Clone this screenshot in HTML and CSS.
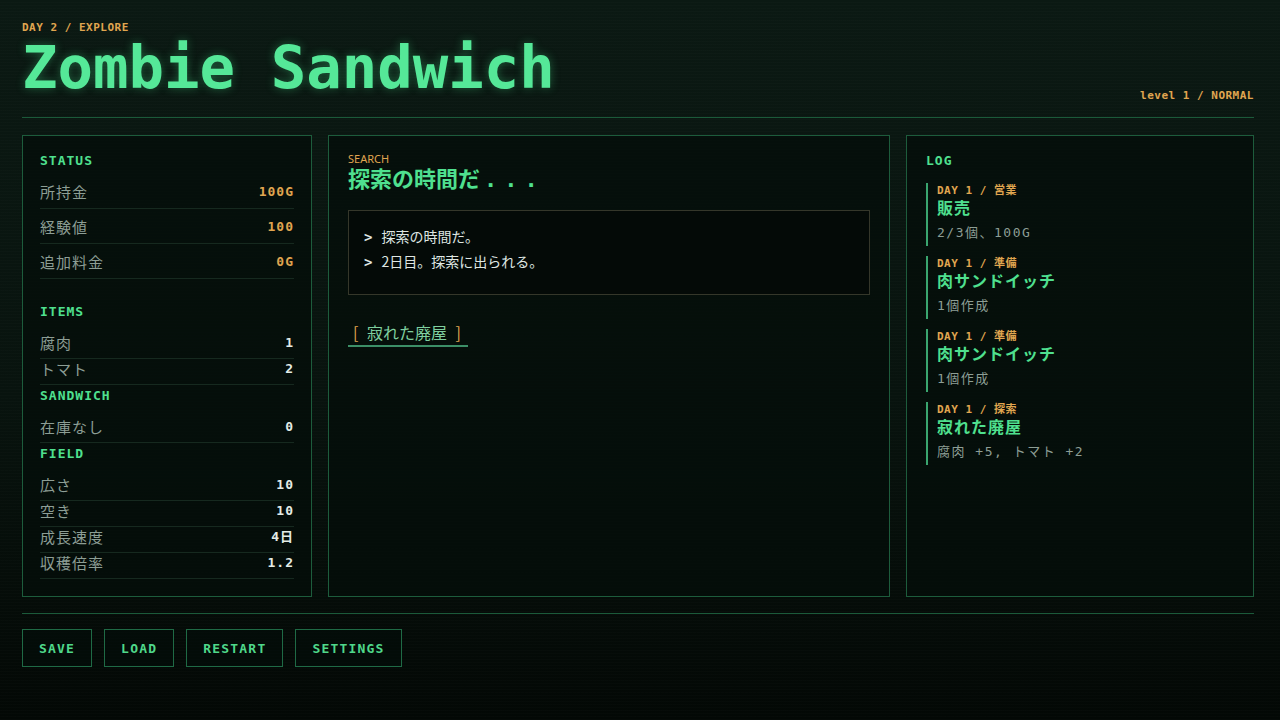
FILE: index.html
```html
<!DOCTYPE html>
<html lang="ja">
<head>
    <meta charset="UTF-8">
    <meta name="viewport" content="width=device-width, initial-scale=1.0">
    <title>Zombie Sandwich</title>
    <link rel="stylesheet" href="styles.css">
</head>
<body>
    <div class="screen">
        <header class="top">
            <div>
                <div class="eyebrow">DAY 2 / EXPLORE</div>
                <h1 class="title">Zombie Sandwich</h1>
            </div>
            <div class="meta">level 1 / NORMAL</div>
        </header>

        <main class="board">
            <!-- player stats -->
            <section class="panel side">
                <h2 class="heading">STATUS</h2>
                <div class="stat-list status">
                    <div class="row"><span>所持金</span><b class="gold">100G</b></div>
                    <div class="row"><span>経験値</span><b class="gold">100</b></div>
                    <div class="row"><span>追加料金</span><b class="gold">0G</b></div>
                </div>

                <h2 class="heading">ITEMS</h2>
                <div class="stat-list">
                    <div class="row"><span>腐肉</span><b>1</b></div>
                    <div class="row"><span>トマト</span><b>2</b></div>
                </div>

                <h2 class="heading">SANDWICH</h2>
                <div class="stat-list">
                    <div class="row"><span>在庫なし</span><b>0</b></div>
                </div>

                <h2 class="heading">FIELD</h2>
                <div class="stat-list">
                    <div class="row"><span>広さ</span><b>10</b></div>
                    <div class="row"><span>空き</span><b>10</b></div>
                    <div class="row"><span>成長速度</span><b>4日</b></div>
                    <div class="row"><span>収穫倍率</span><b>1.2</b></div>
                </div>
            </section>

            <!-- current scene -->
            <section class="panel scene">
                <div class="scene-label">SEARCH</div>
                <h2 class="scene-title">探索の時間だ<span class="dots">...</span></h2>
                <div class="console">
                    <p><span class="prompt">&gt;</span>探索の時間だ。</p>
                    <p><span class="prompt">&gt;</span>2日目。探索に出られる。</p>
                </div>
                <div class="choices">
                    <button class="choice"><i>[</i> 寂れた廃屋 <i>]</i></button>
                </div>
            </section>

            <!-- event history -->
            <section class="panel log">
                <h2 class="heading">LOG</h2>
                <div class="entry">
                    <div class="entry-tag">DAY 1 / 営業</div>
                    <div class="entry-title">販売</div>
                    <div class="entry-text">2/3個、100G</div>
                </div>
                <div class="entry">
                    <div class="entry-tag">DAY 1 / 準備</div>
                    <div class="entry-title">肉サンドイッチ</div>
                    <div class="entry-text">1個作成</div>
                </div>
                <div class="entry">
                    <div class="entry-tag">DAY 1 / 準備</div>
                    <div class="entry-title">肉サンドイッチ</div>
                    <div class="entry-text">1個作成</div>
                </div>
                <div class="entry">
                    <div class="entry-tag">DAY 1 / 探索</div>
                    <div class="entry-title">寂れた廃屋</div>
                    <div class="entry-text">腐肉 +5, トマト +2</div>
                </div>
            </section>
        </main>

        <footer class="bottom">
            <button class="cmd">SAVE</button>
            <button class="cmd">LOAD</button>
            <button class="cmd">RESTART</button>
            <button class="cmd">SETTINGS</button>
        </footer>
    </div>
</body>
</html>
```

FILE: styles.css
```css
html, body {
    margin: 0;
    height: 100%;
}
body {
    background:
        repeating-linear-gradient(0deg, rgba(255,255,255,0.012) 0 1px, transparent 1px 3px),
        linear-gradient(180deg, #0b1913 0%, #08130e 55%, #030805 100%);
    color: #c9d6cf;
    font-family: "DejaVu Sans Mono", "Noto Sans CJK JP", monospace;
    overflow: hidden;
}
.screen {
    padding: 21px 26px 0 22px;
}
.top {
    display: flex;
    justify-content: space-between;
    align-items: flex-end;
    padding-bottom: 16px;
    border-bottom: 1px solid #1b5a3a;
}
.eyebrow {
    font-size: 11px;
    line-height: 14px;
    font-weight: bold;
    letter-spacing: 0.5px;
    color: #e0a650;
}
.title {
    margin: 0;
    font-size: 59px;
    line-height: 66px;
    font-weight: bold;
    color: #55e898;
    text-shadow: 0 0 10px rgba(70, 230, 140, 0.35);
}
.meta {
    font-size: 11px;
    line-height: 14px;
    font-weight: bold;
    letter-spacing: 0.5px;
    color: #e0a650;
    margin-bottom: -2px;
}

.board {
    display: grid;
    grid-template-columns: 290px 562px 1fr;
    grid-template-rows: 462px;
    gap: 16px;
    margin-top: 17px;
}
.panel {
    border: 1px solid #1d5c3c;
    background: rgba(4, 14, 10, 0.75);
    box-sizing: border-box;
    overflow: hidden;
}

/* left column */
.side {
    padding: 17px 17px;
}
.heading {
    margin: 0;
    font-size: 13px;
    line-height: 16px;
    font-weight: bold;
    letter-spacing: 1px;
    color: #4fe08f;
}
.stat-list {
    margin: 13px 0 3px;
}
.stat-list .row {
    display: flex;
    justify-content: space-between;
    align-items: center;
    height: 20px;
    padding: 0 0 5px;
    border-bottom: 1px solid #16291f;
}
.stat-list span {
    font-family: "Noto Sans CJK JP", sans-serif;
    font-size: 15px;
    line-height: 20px;
    letter-spacing: 1px;
    color: #8d9e95;
}
.stat-list b {
    font-size: 13px;
    line-height: 20px;
    letter-spacing: 1px;
    color: #e3ece6;
}
.stat-list b.gold {
    color: #e0a650;
}
.status {
    margin: 5px 0 25px;
}
.status .row {
    padding: 8px 0 6px;
}

/* centre column */
.scene {
    padding: 17px 19px;
}
.scene-label {
    font-family: "Noto Sans", sans-serif;
    font-size: 11px;
    line-height: 12px;
    color: #e0a650;
}
.scene-title {
    margin: 0;
    font-family: "DejaVu Sans Mono", "Noto Sans CJK JP", monospace;
    font-size: 22px;
    line-height: 30px;
    font-weight: bold;
    color: #4fe08f;
}
.scene-title .dots {
    letter-spacing: 7px;
    margin-left: 4px;
}
.console {
    margin-top: 15px;
    border: 1px solid #35372a;
    background: #040a07;
    padding: 13px 15px 20px;
}
.console p {
    margin: 0;
    height: 25px;
    font-family: "Noto Sans CJK JP", sans-serif;
    font-size: 14px;
    line-height: 25px;
    color: #dfe6e2;
}
.console .prompt {
    font-family: "DejaVu Sans Mono", monospace;
    font-weight: bold;
    margin-right: 9px;
}
.choices {
    margin-top: 26px;
}
.choice {
    background: none;
    border: none;
    border-bottom: 2px solid #3c8f67;
    padding: 0 2px 2px 0;
    font-family: "Noto Sans CJK JP", sans-serif;
    font-size: 16px;
    line-height: 22px;
    color: #7fcf9f;
}
.choice i {
    font-style: normal;
    color: #e0a650;
    padding: 0 5px;
}

/* right column */
.log {
    padding: 17px 19px;
}
.log .heading {
    margin-bottom: 14px;
}
.entry {
    border-left: 2px solid #3aa56f;
    padding-left: 9px;
    margin-bottom: 10px;
}
.entry-tag {
    font-size: 11px;
    line-height: 15px;
    font-weight: bold;
    letter-spacing: 0.5px;
    color: #e0a650;
}
.entry-title {
    font-size: 16px;
    line-height: 22px;
    font-weight: bold;
    letter-spacing: 1px;
    color: #4fe08f;
}
.entry-text {
    font-size: 13px;
    line-height: 26px;
    letter-spacing: 1.5px;
    color: #8d9e95;
}

/* command bar */
.bottom {
    display: flex;
    gap: 12px;
    margin-top: 16px;
    padding-top: 15px;
    border-top: 1px solid #1b5a3a;
}
.cmd {
    height: 38px;
    padding: 0 16px;
    background: rgba(4, 14, 10, 0.6);
    border: 1px solid #1f6a45;
    font-family: "DejaVu Sans Mono", monospace;
    font-size: 13px;
    font-weight: bold;
    letter-spacing: 1.2px;
    color: #4fd88a;
}
```
